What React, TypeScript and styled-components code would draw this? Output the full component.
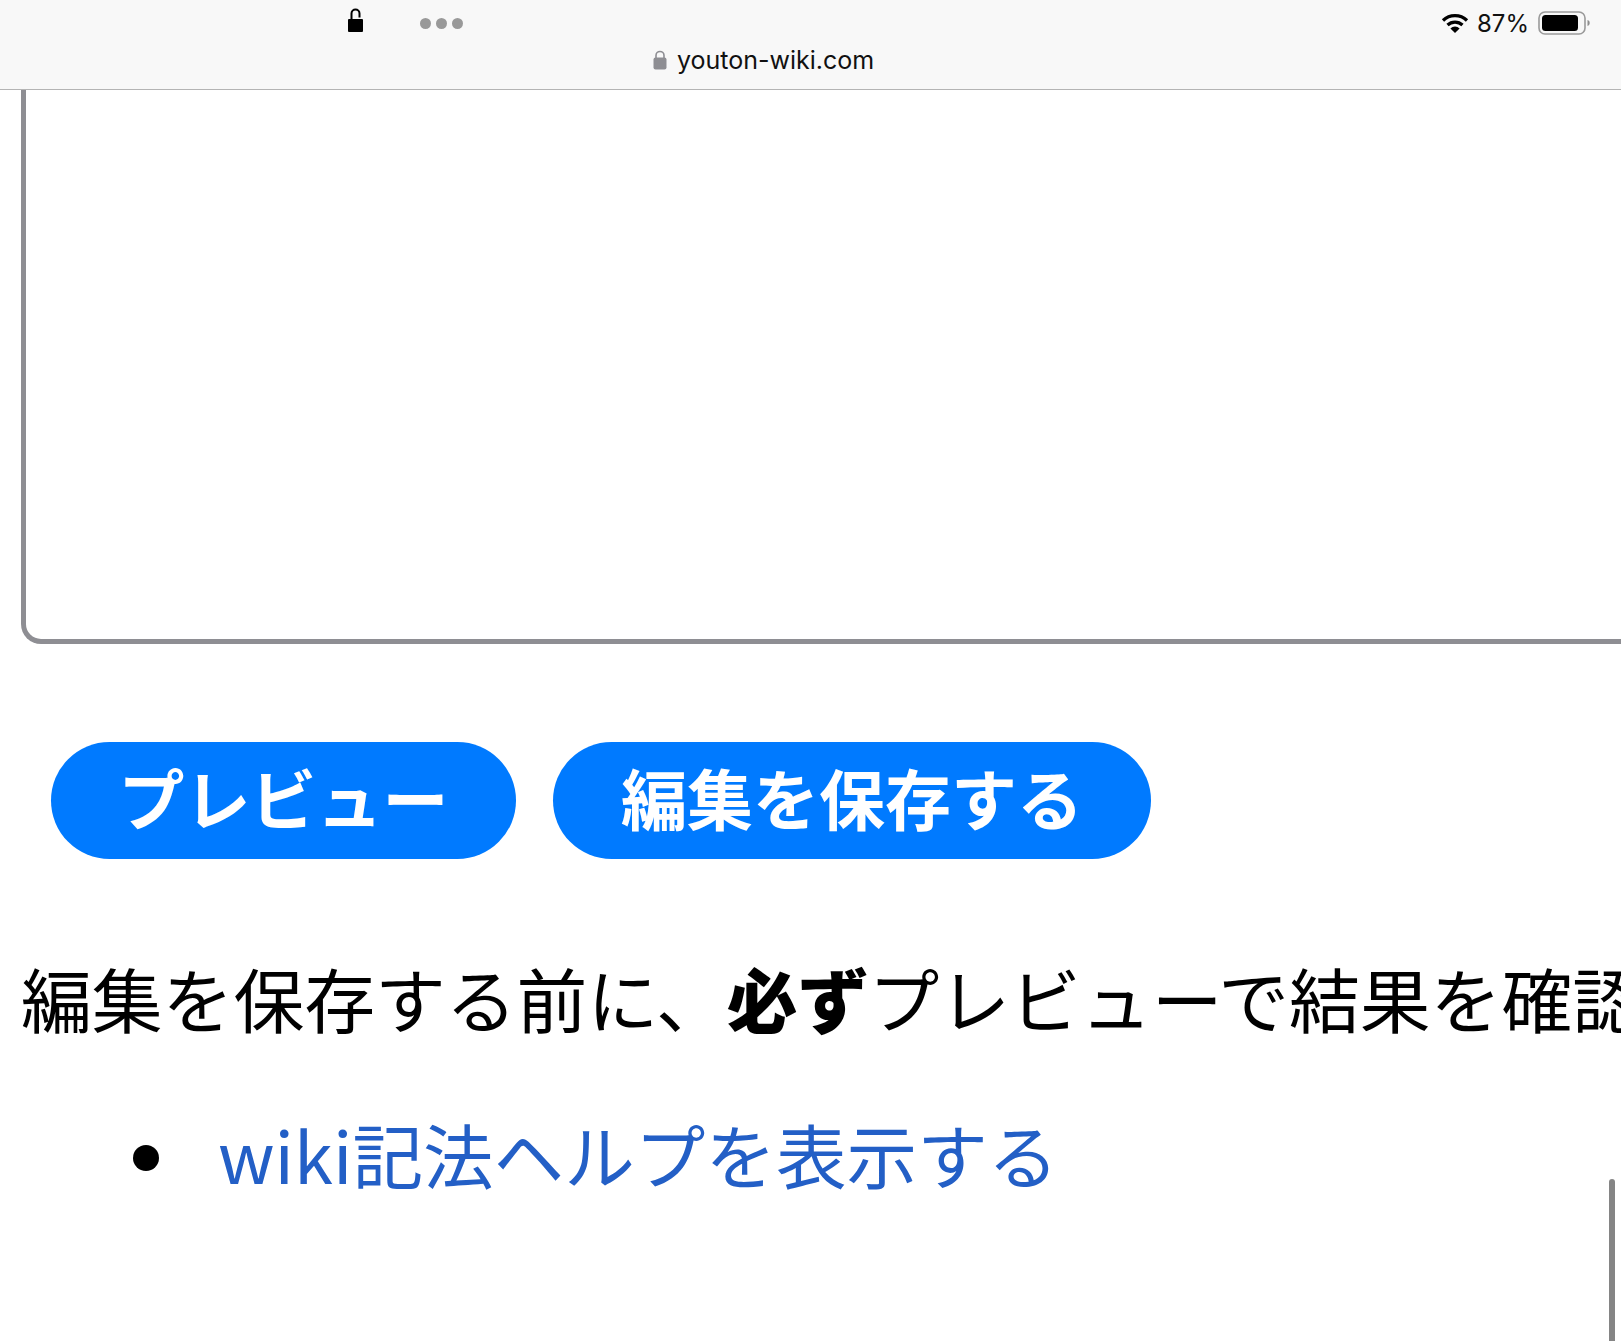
import React from "react";
import styled, { createGlobalStyle } from "styled-components";

const GlobalStyle = createGlobalStyle`
  html, body {
    margin: 0;
    padding: 0;
    background: #fff;
    overflow: hidden;
  }
  body {
    font-family: "Liberation Sans", "Noto Sans CJK JP", sans-serif;
    color: #000;
  }
`;

const Page = styled.div`
  position: relative;
  width: 1621px;
  height: 1341px;
  overflow: hidden;
`;

const StatusBar = styled.header`
  height: 90px;
  box-sizing: border-box;
  background: #f8f8f8;
  border-bottom: 1px solid #b4b4b4;
  display: grid;
  grid-template-rows: 46px 1fr;
`;

const TopRow = styled.div`
  display: flex;
  align-items: center;
  padding: 0 0 0 347px;
`;

const LockSlot = styled.div`
  display: flex;
  margin-top: -5px;
`;

const Dots = styled.div`
  display: flex;
  gap: 5px;
  margin-left: 56px;
`;

const Dot = styled.span`
  width: 11px;
  height: 11px;
  border-radius: 50%;
  background: #999;
`;

const StatusRight = styled.div`
  margin-left: auto;
  padding-right: 31px;
  display: flex;
  align-items: center;
  font: 24px "Inter", sans-serif;
  color: #111;
`;

const Percent = styled.span`
  margin: 0 9px 0 8px;
`;

const UrlRow = styled.div`
  display: flex;
  align-items: center;
  gap: 10px;
  padding-left: 653px;
  margin-top: -15px;
  font: 25px "Inter", "Liberation Sans", sans-serif;
  color: #111;
`;

const Editor = styled.div`
  box-sizing: border-box;
  width: 1700px;
  height: 554px;
  margin-left: 21px;
  background: #fff;
  border: 5px solid #8e8e93;
  border-top: none;
  border-radius: 0 0 0 20px;
`;

const Buttons = styled.div`
  display: flex;
  gap: 37px;
  padding: 98px 0 0 51px;
`;

const PillButton = styled.button<{ $w: number }>`
  height: 117px;
  width: ${(props) => props.$w}px;
  border: none;
  padding: 0 0 10px;
  border-radius: 59px;
  background: #007aff;
  color: #fff;
  font: 700 66px "Noto Sans CJK JP", sans-serif;
  white-space: nowrap;
`;

const Notice = styled.p`
  margin: 88px 0 0 21px;
  font: 400 70.8px/100px "Noto Sans CJK JP", sans-serif;
  white-space: nowrap;

  strong {
    font-weight: 900;
  }
`;

const Links = styled.ul`
  margin: 56px 0 0;
  padding: 0 0 0 218px;
  font: 400 70.6px/100px "Noto Sans CJK JP", sans-serif;
  white-space: nowrap;
  list-style: none;
`;

const LinkItem = styled.li`
  position: relative;

  &::before {
    content: "";
    position: absolute;
    left: -85px;
    top: 42px;
    width: 26px;
    height: 26px;
    border-radius: 50%;
    background: #000;
  }
`;

const HelpLink = styled.a`
  color: #235fc6;
  text-decoration: none;
`;

const ScrollThumb = styled.div`
  position: absolute;
  left: 1609px;
  top: 1179px;
  width: 6px;
  height: 170px;
  border-radius: 3px;
  background: #858585;
`;

const OpenLock = () => (
  <svg width="17" height="25" viewBox="0 0 17 25">
    <rect x="1" y="11" width="15" height="13" rx="1" fill="#000" />
    <path d="M4.5 11V5.5a4 4 0 0 1 8 0V9.5" fill="none" stroke="#000" strokeWidth="2" />
  </svg>
);

const UrlLock = () => (
  <svg width="14" height="20" viewBox="0 0 14 20">
    <rect x="0.5" y="7.5" width="13" height="12" rx="2" fill="#8e8e93" />
    <path d="M3 8V5.5a4 4 0 0 1 8 0V8" fill="none" stroke="#8e8e93" strokeWidth="1.6" />
  </svg>
);

const Wifi = () => (
  <svg width="28" height="20" viewBox="0 0 28 20">
    <path d="M2 7.5a17 17 0 0 1 24 0M6.5 12a11 11 0 0 1 15 0" fill="none" stroke="#000" strokeWidth="3.2" />
    <path d="M14 20l-4.6-4.6a6.6 6.6 0 0 1 9.2 0z" fill="#000" />
  </svg>
);

const Battery = () => (
  <svg width="52" height="24" viewBox="0 0 52 24">
    <rect x="1" y="1" width="46" height="22" rx="6" fill="none" stroke="#9a9a9a" strokeWidth="1.6" />
    <rect x="4" y="4" width="36" height="16" rx="3.5" fill="#000" />
    <path d="M49.5 9c1.6.4 2.2 1.6 2.2 3s-.6 2.6-2.2 3z" fill="#8e8e8e" />
  </svg>
);

export default function App() {
  return (
    <Page>
      <GlobalStyle />
      <StatusBar>
        <TopRow>
          <LockSlot>
            <OpenLock />
          </LockSlot>
          <Dots>
            <Dot />
            <Dot />
            <Dot />
          </Dots>
          <StatusRight>
            <Wifi />
            <Percent>87%</Percent>
            <Battery />
          </StatusRight>
        </TopRow>
        <UrlRow>
          <UrlLock />
          <span>youton-wiki.com</span>
        </UrlRow>
      </StatusBar>
      <Editor />
      <Buttons>
        <PillButton $w={465}>プレビュー</PillButton>
        <PillButton $w={598}>編集を保存する</PillButton>
      </Buttons>
      <Notice>
        編集を保存する前に、<strong>必ず</strong>プレビューで結果を確認してください
      </Notice>
      <Links>
        <LinkItem>
          <HelpLink href="#">wiki記法ヘルプを表示する</HelpLink>
        </LinkItem>
      </Links>
      <ScrollThumb />
    </Page>
  );
}
